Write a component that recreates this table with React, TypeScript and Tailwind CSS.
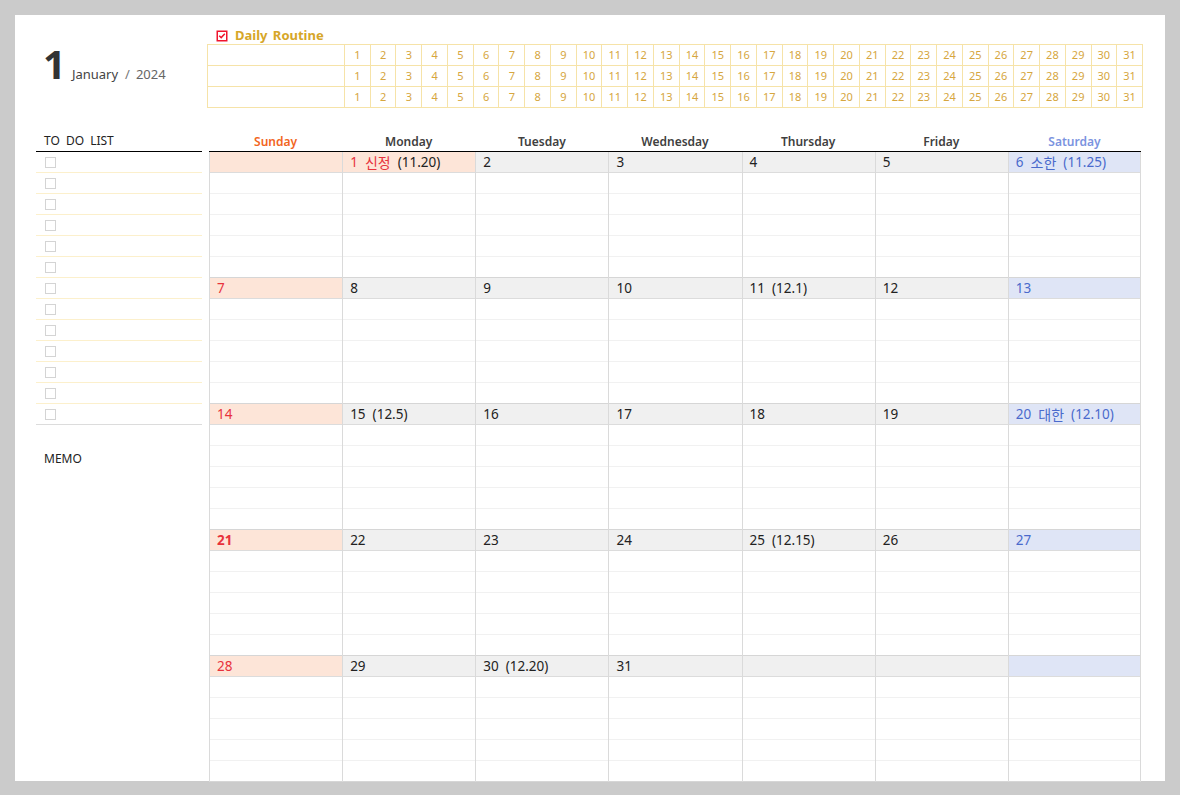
import React from "react";

type Kind = "sun" | "sat" | "wd" | "hol";
type Day = { n?: number; note?: string; lunar?: string; bold?: boolean };

const weeks: Day[][] = [
  [{}, { n: 1, note: "신정", lunar: "11.20" }, { n: 2 }, { n: 3 }, { n: 4 }, { n: 5 }, { n: 6, note: "소한", lunar: "11.25" }],
  [{ n: 7 }, { n: 8 }, { n: 9 }, { n: 10 }, { n: 11, lunar: "12.1" }, { n: 12 }, { n: 13 }],
  [{ n: 14 }, { n: 15, lunar: "12.5" }, { n: 16 }, { n: 17 }, { n: 18 }, { n: 19 }, { n: 20, note: "대한", lunar: "12.10" }],
  [{ n: 21, bold: true }, { n: 22 }, { n: 23 }, { n: 24 }, { n: 25, lunar: "12.15" }, { n: 26 }, { n: 27 }],
  [{ n: 28 }, { n: 29 }, { n: 30, lunar: "12.20" }, { n: 31 }, {}, {}, {}],
];

const dayNames = ["Sunday", "Monday", "Tuesday", "Wednesday", "Thursday", "Friday", "Saturday"];

const kindOf = (col: number, d: Day): Kind => {
  if (col === 0) return "sun";
  if (col === 6) return "sat";
  if (d.n === 1) return "hol";
  return "wd";
};

const dateBg: Record<Kind, string> = {
  sun: "bg-[#fde5d8]",
  hol: "bg-[#fde5d8]",
  sat: "bg-[#dfe5f6]",
  wd: "bg-[#f0f0f0]",
};

const dateText: Record<Kind, string> = {
  sun: "text-[#e8323c]",
  hol: "text-[#e8323c]",
  sat: "text-[#4a6acc]",
  wd: "text-[#222]",
};

const CheckIcon = () => (
  <svg width="12" height="12" viewBox="0 0 12 12">
    <rect x="0.5" y="0.5" width="11" height="11" fill="#f0142c" />
    <rect x="2" y="2" width="8" height="8" fill="#fff" />
    <path d="M3.2 5.8 L5.2 7.6 L8.8 3.8" stroke="#f0142c" strokeWidth="1.5" fill="none" />
  </svg>
);

const DailyRoutine = () => (
  <div className="w-[936px] pt-[12px]">
    <div className="flex h-[17px] items-center gap-[7px] pl-[9px]">
      <CheckIcon />
      <span className="text-[13px] font-bold text-[#d6a628] [word-spacing:2px]">Daily Routine</span>
    </div>
    <div className="border-t border-l border-[#f6e3a8]">
      {[0, 1, 2].map((r) => (
        <div key={r} className="grid h-[21px] grid-cols-[137px_repeat(31,1fr)]">
          <div className="border-r border-b border-[#f6e3a8]" />
          {Array.from({ length: 31 }, (_, i) => (
            <div
              key={i}
              className="flex items-center justify-center border-r border-b border-[#f6e3a8] text-[11px] text-[#d6a640]"
            >
              {i + 1}
            </div>
          ))}
        </div>
      ))}
    </div>
  </div>
);

const TodoList = () => (
  <div className="w-[166px]">
    <div className="flex h-[21px] items-center border-b border-black pl-[8px] text-[12px] text-[#222] [word-spacing:3px]">
      TO DO LIST
    </div>
    {Array.from({ length: 13 }, (_, i) => (
      <div
        key={i}
        className={`flex h-[21px] items-center pl-[9px] border-b ${i === 12 ? "border-[#dcdcdc]" : "border-[#fcf0cc]"}`}
      >
        <div className="h-[11px] w-[11px] border border-[#d4d4d4] bg-white" />
      </div>
    ))}
    <div className="pt-[25px] pl-[8px] text-[12px] text-[#222]">MEMO</div>
  </div>
);

const DateCell = ({ col, d }: { col: number; d: Day }) => {
  const k = kindOf(col, d);
  return (
    <div className={`flex flex-col border-l border-[#dadada] ${col === 6 ? "border-r" : ""}`}>
      <div
        className={`flex h-[21px] items-center border-b border-[#dcdcdc] pl-[7px] text-[13.5px] ${dateBg[k]} ${dateText[k]} ${d.bold ? "font-bold" : ""}`}
      >
        {d.n && <span>{d.n}</span>}
        {d.note && <span className="ml-[7px] text-[14px]">{d.note}</span>}
        {d.lunar && (
          <span className={`ml-[7px] ${k === "hol" ? "text-[#222]" : ""}`}>({d.lunar})</span>
        )}
      </div>
      {[0, 1, 2, 3, 4].map((r) => (
        <div
          key={r}
          className={`h-[21px] border-b ${r === 4 ? "border-[#d6d6d6]" : "border-[#f1f1f1]"}`}
        />
      ))}
    </div>
  );
};

const Calendar = () => (
  <div className="ml-[7px] w-[932px]">
    <div className="grid h-[21px] grid-cols-7 border-b border-black pt-[2px] text-[12px] font-semibold">
      {dayNames.map((n, i) => (
        <div
          key={n}
          className={`flex items-center justify-center ${
            i === 0 ? "text-[#f26522]" : i === 6 ? "text-[#7b93e0]" : "text-[#404040]"
          }`}
        >
          {n}
        </div>
      ))}
    </div>
    {weeks.map((w, wi) => (
      <div key={wi} className="grid grid-cols-7">
        {w.map((d, col) => (
          <DateCell key={col} col={col} d={d} />
        ))}
      </div>
    ))}
  </div>
);

export default function App() {
  return (
    <div className="h-[795px] w-[1180px] bg-[#cbcbcb] pt-[15px] pl-[15px] font-['Noto_Sans','Noto_Sans_CJK_KR',sans-serif]">
      <div className="h-[766px] w-[1150px] bg-white pl-[21px]">
        <div className="flex h-[116px]">
          <div className="w-[171px] pt-[29px] pl-[7px]">
            <div className="flex items-baseline">
              <span className="text-[40px] font-bold leading-none text-[#333]">1</span>
              <span className="ml-[6px] text-[13px] text-[#444]">January</span>
              <span className="ml-[7px] text-[13px] text-[#777]">/</span>
              <span className="ml-[6px] text-[13px] text-[#666]">2024</span>
            </div>
          </div>
          <DailyRoutine />
        </div>
        <div className="flex">
          <TodoList />
          <Calendar />
        </div>
      </div>
    </div>
  );
}
